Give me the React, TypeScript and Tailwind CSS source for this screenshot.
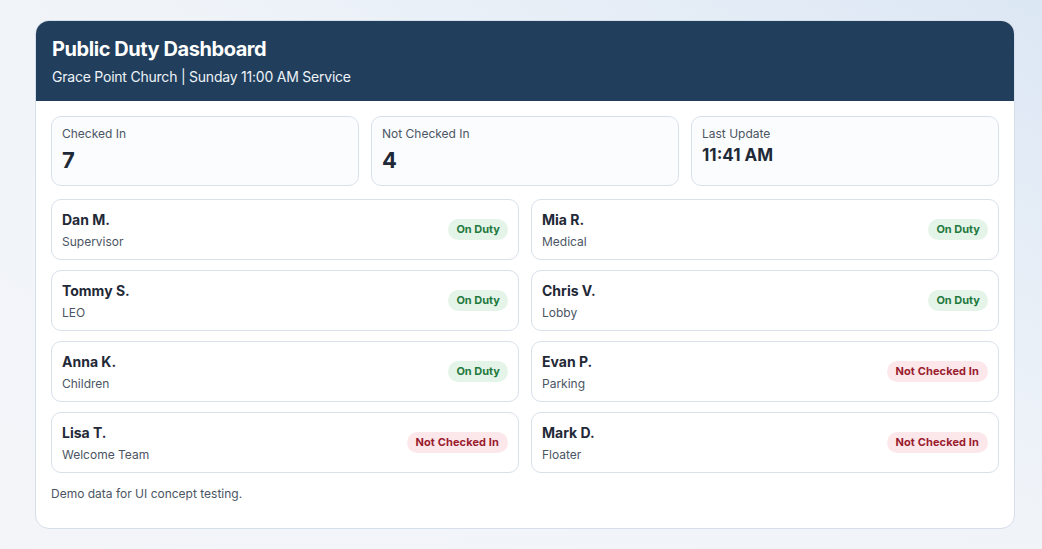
type Duty = {
  name: string;
  role: string;
  onDuty: boolean;
};

const stats = [
  { label: "Checked In", value: "7", big: true },
  { label: "Not Checked In", value: "4", big: true },
  { label: "Last Update", value: "11:41 AM", big: false },
];

const people: Duty[] = [
  { name: "Dan M.", role: "Supervisor", onDuty: true },
  { name: "Mia R.", role: "Medical", onDuty: true },
  { name: "Tommy S.", role: "LEO", onDuty: true },
  { name: "Chris V.", role: "Lobby", onDuty: true },
  { name: "Anna K.", role: "Children", onDuty: true },
  { name: "Evan P.", role: "Parking", onDuty: false },
  { name: "Lisa T.", role: "Welcome Team", onDuty: false },
  { name: "Mark D.", role: "Floater", onDuty: false },
];

function Badge({ onDuty }: { onDuty: boolean }) {
  if (onDuty) {
    return (
      <span className="rounded-full bg-[#e5f4e9] px-2 text-[11px] font-bold leading-[21px] text-[#1f7a3d]">
        On Duty
      </span>
    );
  }
  return (
    <span className="rounded-full bg-[#fce8eb] px-[9px] text-[11px] font-bold leading-[21px] tracking-[0.01em] text-[#9a1c2e]">
      Not Checked In
    </span>
  );
}

export default function App() {
  return (
    <div
      className="min-h-[549px] bg-[linear-gradient(30deg,#f3f5f9_0%,#f0f4f9_55%,#dce7f4_100%)] pl-[35px] pt-5 pb-5"
      style={{ fontFamily: "Inter, 'Noto Sans', sans-serif" }}
    >
      <div className="w-[980px] overflow-hidden rounded-[14px] border border-[#d6deea] bg-white">
        <header className="bg-[#213f5c] px-4 pt-[14px] pb-[14px] text-white">
          <h1 className="text-[20px] font-bold leading-7 tracking-[-0.022em]">Public Duty Dashboard</h1>
          <p className="mt-1 text-[14px] leading-5 tracking-[-0.016em] text-[#eef3f8]">
            Grace Point Church | Sunday 11:00 AM Service
          </p>
        </header>

        <main className="px-[15px] pt-[15px] pb-[26px]">
          <div className="grid grid-cols-3 gap-3">
            {stats.map((s) => (
              <div
                key={s.label}
                className="h-[70px] rounded-[10px] border border-[#d8e0ea] bg-[#fbfcfe] px-[10px] pt-[9px]"
              >
                <div className="text-[12px] leading-4 text-[#4b5563]">{s.label}</div>
                {s.big ? (
                  <div className="mt-[4px] text-[22px] font-bold leading-7 text-[#1f2937]">{s.value}</div>
                ) : (
                  <div className="mt-[1px] text-[17px] font-bold leading-6 text-[#1f2937]">{s.value}</div>
                )}
              </div>
            ))}
          </div>

          <div className="mt-[13px] grid grid-cols-2 gap-x-3 gap-y-[10px]">
            {people.map((p) => (
              <div
                key={p.name}
                className="flex h-[61px] items-center justify-between rounded-[10px] border border-[#d8e0ea] bg-white px-[10px]"
              >
                <div>
                  <div className="text-[14px] font-bold leading-5 text-[#1f2937]">{p.name}</div>
                  <div className="mt-1 text-[12px] leading-4 text-[#4b5563]">{p.role}</div>
                </div>
                <Badge onDuty={p.onDuty} />
              </div>
            ))}
          </div>

          <p className="mt-[13px] text-[12px] leading-4 text-[#4b5563]">Demo data for UI concept testing.</p>
        </main>
      </div>
    </div>
  );
}
